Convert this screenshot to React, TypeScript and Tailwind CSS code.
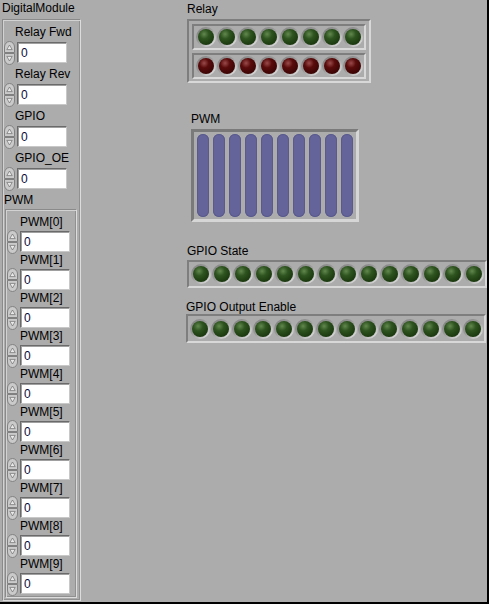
import React from 'react';

const sunken =
  'border-2 border-t-[#7e7e7e] border-l-[#7e7e7e] border-r-[#d8d8d8] border-b-[#d8d8d8]';
const groove =
  'border border-t-[#8a8a8a] border-l-[#8a8a8a] border-r-[#dcdcdc] border-b-[#dcdcdc] shadow-[inset_1px_1px_0_#d2d2d2,inset_-1px_-1px_0_#909090]';

function Label({ text, className = '' }: { text: string; className?: string }) {
  return (
    <div className={`h-[14px] leading-[14px] text-[12px] text-black whitespace-nowrap ${className}`}>
      {text}
    </div>
  );
}

function Spinner() {
  return (
    <svg width="11" height="24" viewBox="0 0 11 24" className="shrink-0">
      <path d="M0.5 11.5 V6 A5 5.5 0 0 1 10.5 6 V11.5 Z" fill="#cacaca" stroke="#808080" />
      <path d="M0.5 12.5 V18 A5 5.5 0 0 0 10.5 18 V12.5 Z" fill="#cacaca" stroke="#808080" />
      <path d="M5.5 4 L2.8 8.6 H8.2 Z" fill="#e8e8e8" stroke="#6e6e6e" strokeWidth="0.7" />
      <path d="M5.5 20 L2.8 15.4 H8.2 Z" fill="#e8e8e8" stroke="#6e6e6e" strokeWidth="0.7" />
    </svg>
  );
}

function NumBox() {
  return (
    <div className="w-[50px] h-[21px] shrink-0 bg-white border border-t-[#6a6a6a] border-l-[#6a6a6a] border-r-[#c8c8c8] border-b-[#c8c8c8] shadow-[inset_1px_1px_0_#a0a0a0] flex items-center pl-[3px] text-[12px] text-[#0b0b3a]">
      0
    </div>
  );
}

function NumRow() {
  return (
    <div className="flex h-[21px] items-center gap-[2px] pl-[1px]">
      <Spinner />
      <NumBox />
    </div>
  );
}

function Led({ red = false }: { red?: boolean }) {
  return (
    <div className="w-[20px] h-[20px] rounded-full bg-[linear-gradient(135deg,#7c7c7c_0%,#9c9c9c_45%,#eaeaea_100%)] flex items-center justify-center">
      <div
        className={
          red
            ? 'w-[16px] h-[16px] rounded-full bg-[radial-gradient(circle_at_38%_32%,#9a4a4a_0%,#5a0c0c_32%,#420606_65%,#260202_100%)]'
            : 'w-[16px] h-[16px] rounded-full bg-[radial-gradient(circle_at_38%_32%,#62884e_0%,#2f5420_32%,#1f3f12_65%,#12270a_100%)]'
        }
      />
    </div>
  );
}

function LedRow({ count, red = false }: { count: number; red?: boolean }) {
  return (
    <div className="flex items-center h-full pl-[1px]">
      {Array.from({ length: count }).map((_, i) => (
        <div key={i} className="w-[21px] flex justify-center">
          <Led red={red} />
        </div>
      ))}
    </div>
  );
}

const topControls = ['Relay Fwd', 'Relay Rev', 'GPIO', 'GPIO_OE'];

export default function App() {
  return (
    <div className="w-[489px] h-[604px] bg-[#acacac] border-r-2 border-b-2 border-black flex overflow-hidden font-['Liberation_Sans',Arial,sans-serif]">
      {/* DigitalModule cluster */}
      <div className="ml-[2px] mt-[1px] w-[79px] shrink-0">
        <Label text="DigitalModule" />
        <div className={`mt-[4px] w-[79px] h-[582px] ${groove} pt-[5px]`}>
          {topControls.map((name) => (
            <div key={name} className="mb-[4px]">
              <Label text={name} className="pl-[12px]" />
              <div className="mt-[3px]">
                <NumRow />
              </div>
            </div>
          ))}
          <Label text="PWM" className="pl-[1px]" />
          <div className={`mt-[2px] ml-[2px] w-[72px] h-[389px] ${groove} pt-[5px]`}>
            {Array.from({ length: 10 }).map((_, i) => (
              <div key={i} className="mb-[1px]">
                <Label text={`PWM[${i}]`} className="pl-[14px]" />
                <div className="mt-[2px]">
                  <NumRow />
                </div>
              </div>
            ))}
          </div>
        </div>
      </div>

      {/* indicators */}
      <div className="ml-[105px] flex flex-col">
        <Label text="Relay" className="mt-[2px] pl-[1px]" />
        <div className={`mt-[3px] ml-[1px] w-[184px] h-[64px] ${sunken} pl-[3px] pt-[3px] flex flex-col gap-[3px]`}>
          <div className={`w-[174px] h-[26px] ${sunken}`}>
            <LedRow count={8} />
          </div>
          <div className={`w-[174px] h-[26px] ${sunken}`}>
            <LedRow count={8} red />
          </div>
        </div>

        <Label text="PWM" className="mt-[29px] pl-[5px]" />
        <div className="mt-[3px] ml-[5px] w-[168px] h-[93px] border-[3px] border-t-[#7a7a7a] border-l-[#7a7a7a] border-r-[#d6d6d6] border-b-[#d6d6d6] pl-[3px] pt-[2px] flex gap-[4px]">
          {Array.from({ length: 10 }).map((_, i) => (
            <div key={i} className="w-[12px] h-[83px] rounded-full bg-[#64649a] shadow-[inset_0_0_0_1px_#5a5a8c]" />
          ))}
        </div>

        <Label text="GPIO State" className="mt-[22px] pl-[1px]" />
        <div className={`mt-[2px] ml-[1px] w-[300px] h-[28px] ${sunken}`}>
          <LedRow count={14} />
        </div>

        <Label text="GPIO Output Enable" className="mt-[12px]" />
        <div className={`w-[300px] h-[29px] ${sunken}`}>
          <LedRow count={14} />
        </div>
      </div>
    </div>
  );
}
